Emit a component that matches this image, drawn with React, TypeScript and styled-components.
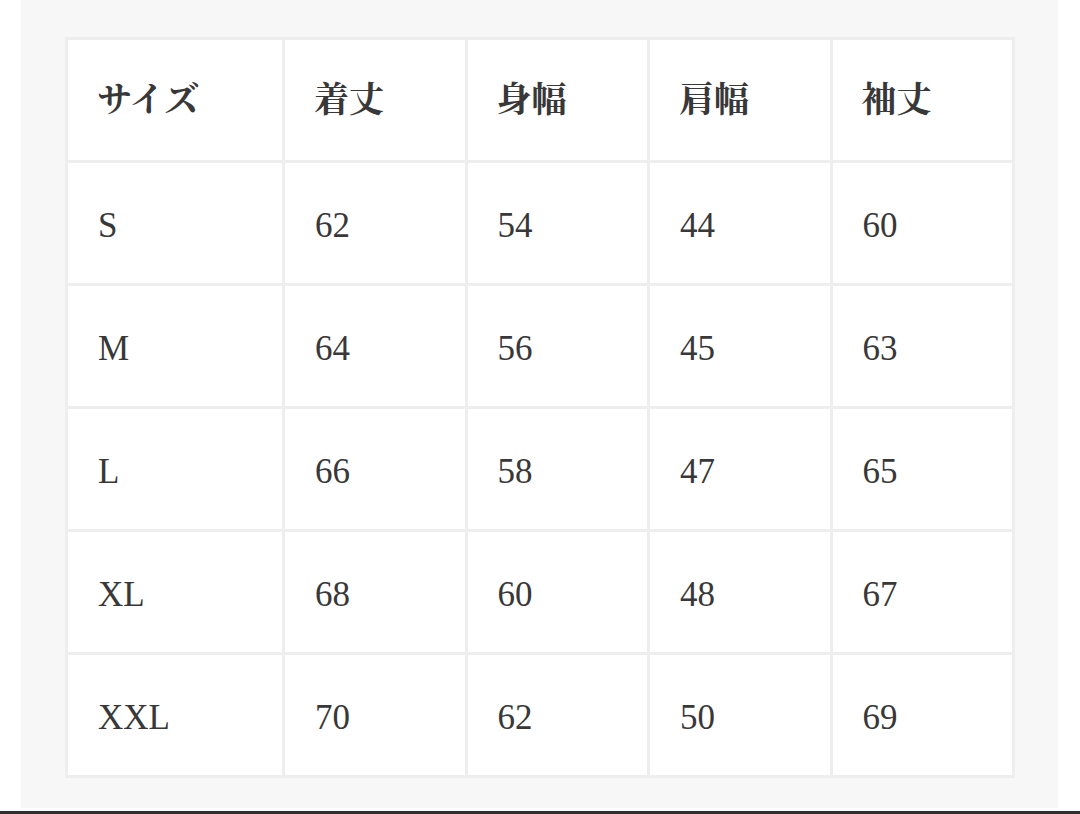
import React from 'react'
import styled, { createGlobalStyle } from 'styled-components'

const GlobalStyle = createGlobalStyle`
  html, body {
    margin: 0;
    padding: 0;
    background: #ffffff;
  }
`

const Page = styled.div`
  width: 1080px;
  height: 814px;
  display: flex;
  flex-direction: column;
  overflow: hidden;
`

const Body = styled.div`
  flex: 1;
  display: flex;
`

const Panel = styled.div`
  margin-left: 21px;
  width: 1037px;
  height: 808px;
  background: #f7f7f7;
  padding: 37px 0 0 44px;
  box-sizing: border-box;
`

const BottomBar = styled.div`
  height: 3px;
  background: #2e2e2e;
`

const Table = styled.table`
  width: 950px;
  border-collapse: separate;
  border-spacing: 3px;
  background: #eeeeee;
  table-layout: fixed;
  font-family: 'Liberation Serif', 'Noto Serif CJK JP', 'Noto Sans CJK JP', serif;
  color: #383838;
`

const Cell = styled.td<{ $head?: boolean }>`
  background: #ffffff;
  height: 120px;
  padding: ${p => (p.$head ? '0 0 0 29px' : '4px 0 0 30px')};
  vertical-align: middle;
  text-align: left;
  font-size: ${p => (p.$head ? '35px' : '35px')};
  font-weight: ${p => (p.$head ? 700 : 400)};
  line-height: 1;
  box-sizing: border-box;
`

const headers = ['サイズ', '着丈', '身幅', '肩幅', '袖丈']

const rows: (string | number)[][] = [
  ['S', 62, 54, 44, 60],
  ['M', 64, 56, 45, 63],
  ['L', 66, 58, 47, 65],
  ['XL', 68, 60, 48, 67],
  ['XXL', 70, 62, 50, 69],
]

export default function App() {
  return (
    <Page>
      <GlobalStyle />
      <Body>
        <Panel>
          <Table>
            <colgroup>
              <col style={{ width: 214 }} />
              <col />
              <col />
              <col />
              <col />
            </colgroup>
            <thead>
              <tr>
                {headers.map(h => (
                  <Cell as="th" $head key={h}>
                    {h}
                  </Cell>
                ))}
              </tr>
            </thead>
            <tbody>
              {rows.map(r => (
                <tr key={r[0]}>
                  {r.map((v, i) => (
                    <Cell key={i}>{v}</Cell>
                  ))}
                </tr>
              ))}
            </tbody>
          </Table>
        </Panel>
      </Body>
      <BottomBar />
    </Page>
  )
}
